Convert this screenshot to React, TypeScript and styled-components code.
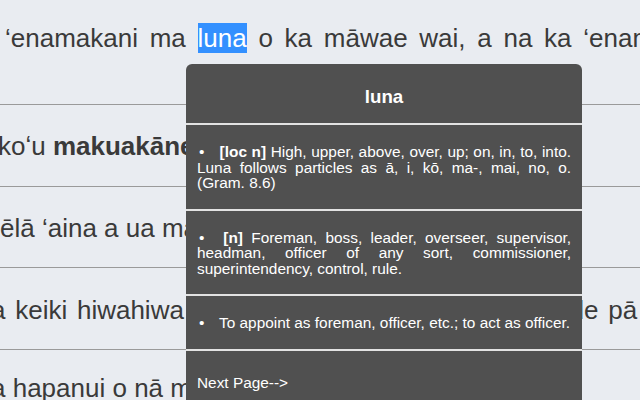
import React from "react"
import styled, { createGlobalStyle } from "styled-components"

const GlobalStyle = createGlobalStyle`
  html, body {
    margin: 0;
    padding: 0;
    background: #e9ecf1;
    overflow: hidden;
  }
  body {
    font-family: "Liberation Sans", Arial, sans-serif;
  }
`

const Page = styled.div`
  position: relative;
  width: 640px;
  height: 400px;
  overflow: hidden;
`

const Reading = styled.div`
  display: flex;
  flex-direction: column;
`

const Sentence = styled.div<{ $top: number; $bottom: number }>`
  padding: ${p => p.$top}px 0 ${p => p.$bottom}px;
  border-bottom: 1px solid #9a9a9a;
  font-size: 26px;
  line-height: 30px;
  color: #3a3a3a;
  white-space: nowrap;
  overflow: hidden;
`

const SentenceText = styled.span<{ $shift: number; $spacing: number }>`
  display: inline-block;
  margin-left: ${p => p.$shift}px;
  word-spacing: ${p => p.$spacing}px;
`

const Highlight = styled.span`
  background: #3390ff;
  color: #ffffff;
`

const Gap = styled.span<{ $width: number }>`
  display: inline-block;
  width: ${p => p.$width}px;
`

const Popup = styled.div`
  position: absolute;
  left: 186px;
  top: 64px;
  width: 396px;
  background: #505050;
  color: #ffffff;
  border-radius: 6px 6px 0 0;
  font-family: "Liberation Sans", Arial, sans-serif;
`

const PopupTitle = styled.div`
  height: 59px;
  box-sizing: border-box;
  padding-top: 6px;
  display: flex;
  align-items: center;
  justify-content: center;
  font-size: 18.72px;
  font-weight: bold;
`

const Entry = styled.div`
  border-top: 2px solid #e2e2e2;
  padding: 19px 11px 18px;
  font-size: 15.4px;
  line-height: 15.5px;
  text-align: justify;
  text-align-last: left;
`

const Bullet = styled.span`
  display: inline-block;
  width: 18px;
  padding-left: 2px;
  box-sizing: border-box;
`

const Tag = styled.b`
  font-weight: bold;
`

const NextPage = styled.div`
  border-top: 2px solid #e2e2e2;
  padding: 24px 11px 30px;
  font-size: 15.4px;
  line-height: 15px;
`

const definitions = [
  { tag: "[loc n]", text: "High, upper, above, over, up; on, in, to, into. Luna follows particles as ā, i, kō, ma-, mai, no, o. (Gram. 8.6)" },
  { tag: "[n]", text: "Foreman, boss, leader, overseer, supervisor, headman, officer of any sort, commissioner, superintendency, control, rule." },
  { tag: "", text: "To appoint as foreman, officer, etc.; to act as officer." },
]

const App = () => {
  return (
    <Page>
      <GlobalStyle />
      <Reading>
        <Sentence $top={23} $bottom={51}>
          <SentenceText $shift={5} $spacing={4.5}>
            ‘enamakani ma <Highlight>luna</Highlight> o ka māwae wai, a na ka ‘enamakani
          </SentenceText>
        </Sentence>
        <Sentence $top={26} $bottom={25}>
          <SentenceText $shift={-2} $spacing={0}>
            koʻu <b>makuakāne</b> i ka wā kahiko
          </SentenceText>
        </Sentence>
        <Sentence $top={26} $bottom={24}>
          <SentenceText $shift={0} $spacing={0}>
            ēlā ‘aina a ua mālama
          </SentenceText>
        </Sentence>
        <Sentence $top={27} $bottom={24}>
          <SentenceText $shift={-9} $spacing={2.5}>
            a keiki hiwahiwa<Gap $width={380} />ale pā
          </SentenceText>
        </Sentence>
        <Sentence $top={23} $bottom={27}>
          <SentenceText $shift={-9} $spacing={0}>
            a hapanui o nā mea
          </SentenceText>
        </Sentence>
      </Reading>

      <Popup>
        <PopupTitle>luna</PopupTitle>
        {definitions.map((d, i) => (
          <Entry key={i}>
            <Bullet>•</Bullet>{" "}
            {d.tag && <Tag>{d.tag}</Tag>}{d.tag && " "}
            {d.text}
          </Entry>
        ))}
        <NextPage>Next Page--&gt;</NextPage>
      </Popup>
    </Page>
  )
}

export default App
